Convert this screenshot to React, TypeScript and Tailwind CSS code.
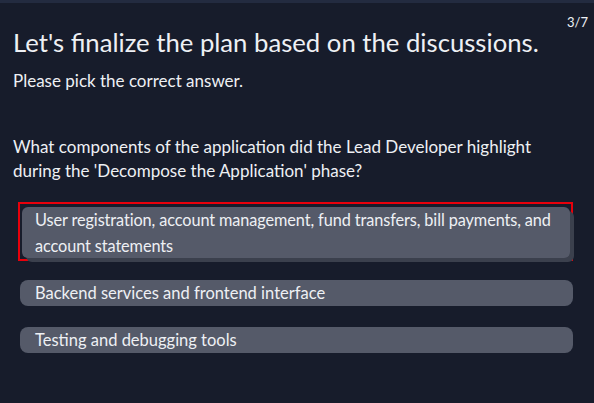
const options = [
  "User registration, account management, fund transfers, bill payments, and account statements",
  "Backend services and frontend interface",
  "Testing and debugging tools",
];

export default function App() {
  const selected = 0;
  return (
    <div
      className="h-[403px] w-full bg-[#232b40] pt-[3px] text-[#eef0f4]"
      style={{ fontFamily: "Lato, 'Noto Sans', sans-serif" }}
    >
      <div className="relative h-full bg-[#171c2b] px-[13px]">
        {/* step counter */}
        <span className="absolute right-[6px] top-[11px] text-[13px] leading-4">3/7</span>

        <h1 className="pt-[21px] text-[25.7px] leading-[36px] font-normal">
          Let's finalize the plan based on the discussions.
        </h1>
        <p className="mt-[9px] text-[17px] leading-6">Please pick the correct answer.</p>

        <p className="mt-[42px] text-[17px] leading-6">
          What components of the application did the Lead Developer highlight during the
          'Decompose the Application' phase?
        </p>

        <div className="mt-[19px] flex flex-col">
          {options.map((opt, i) =>
            i === selected ? (
              <div key={i} className="ml-[5px] mr-[8px] border-2 border-[#e8000b] pb-[1px] pl-[2px] pr-[1px] pt-[3px]">
                <button className="w-full rounded-md bg-[#555a69] pl-[13px] pr-0 text-left text-[16.3px] leading-[25.5px] tracking-[-0.1px] shadow-[4px_4px_0_#3b404d]">
                  {opt}
                </button>
              </div>
            ) : (
              <button
                key={i}
                className={`ml-[7px] mr-[8px] rounded-lg bg-[#555a69] px-[15px] text-left text-[16.5px] leading-[26px] ${i === 1 ? "mt-[19px]" : "mt-[21px]"}`}
              >
                {opt}
              </button>
            )
          )}
        </div>
      </div>
    </div>
  );
}
